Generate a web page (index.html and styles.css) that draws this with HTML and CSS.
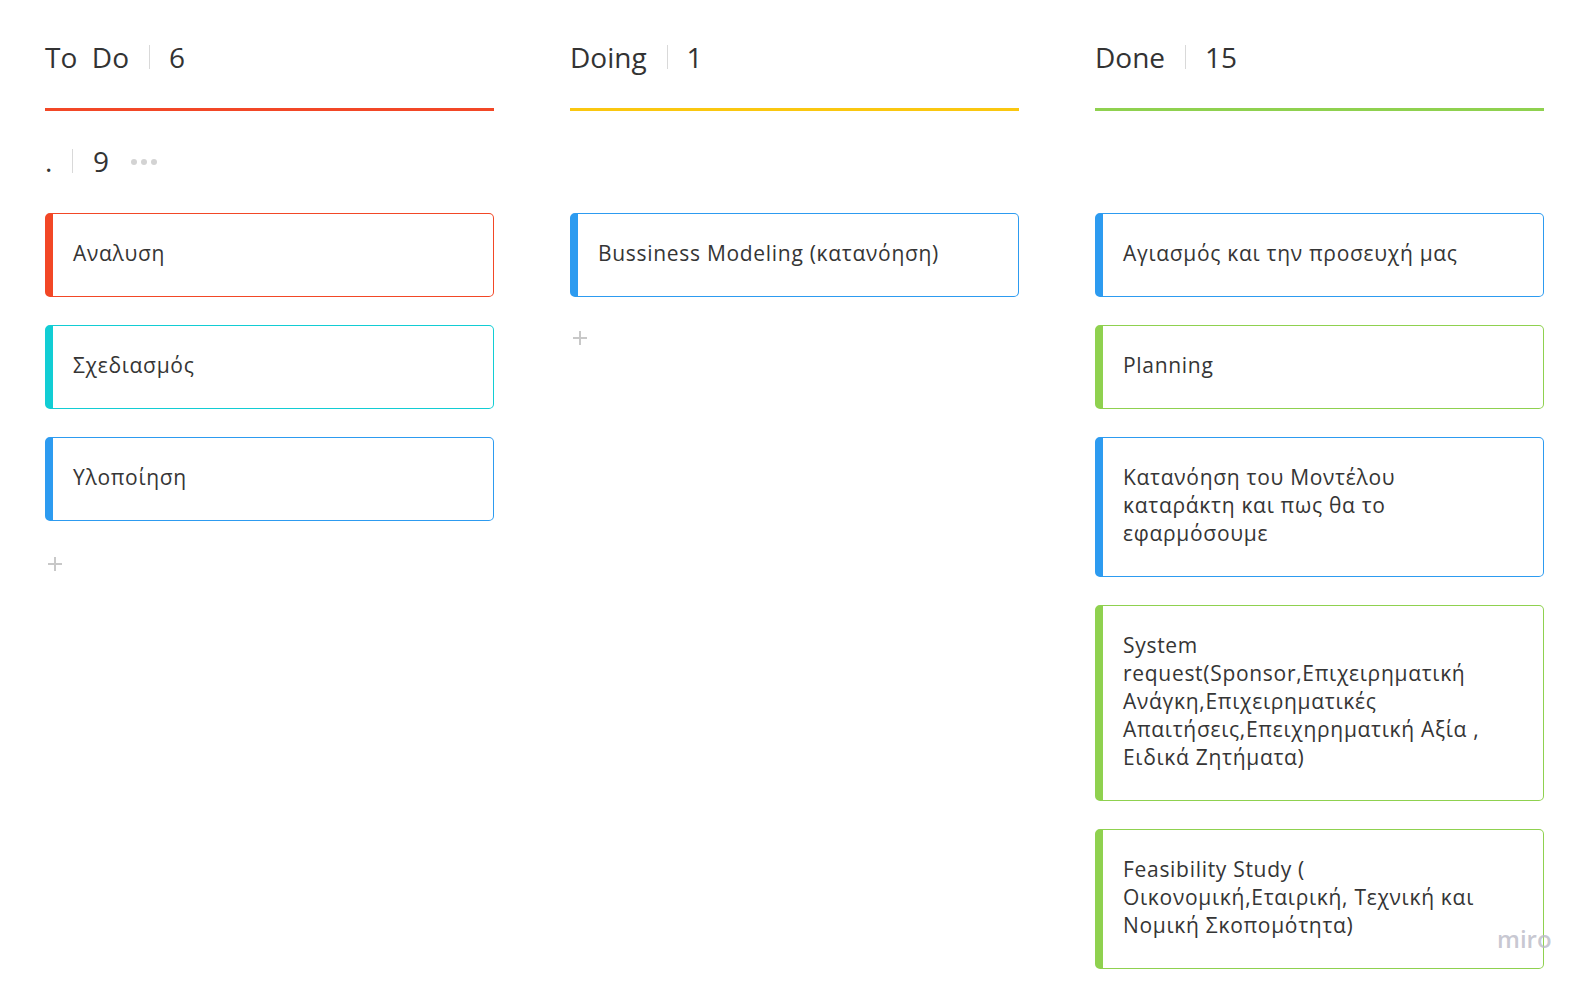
FILE: index.html
```html
<!DOCTYPE html>
<html lang="el">
<head>
<meta charset="utf-8">
<title>Kanban</title>
<link rel="stylesheet" href="styles.css">
</head>
<body>
<main class="board">
  <div class="col-head">
    <span class="col-title">To  Do</span><span class="sep"></span><span class="col-count">6</span>
  </div>
  <div class="col-head">
    <span class="col-title">Doing</span><span class="sep"></span><span class="col-count">1</span>
  </div>
  <div class="col-head">
    <span class="col-title">Done</span><span class="sep"></span><span class="col-count">15</span>
  </div>

  <div class="rule rule-red"></div>
  <div class="rule rule-yellow"></div>
  <div class="rule rule-green"></div>

  <div class="lane-head">
    <span class="lane-title">.</span><span class="sep sep-small"></span><span class="lane-count">9</span>
    <span class="dots"><i></i><i></i><i></i></span>
  </div>
  <div class="lane-empty"></div>
  <div class="lane-empty"></div>

  <div class="cards">
    <div class="card card-red">Αναλυση</div>
    <div class="card card-cyan">Σχεδιασμός</div>
    <div class="card card-blue">Υλοποίηση</div>
    <div class="add add-todo"><svg width="16" height="16" viewBox="0 0 16 16"><path d="M8 1v14M1 8h14" stroke="#c8c8c8" stroke-width="2"/></svg></div>
  </div>
  <div class="cards">
    <div class="card card-blue">Bussiness Modeling (κατανόηση)</div>
    <div class="add add-doing"><svg width="16" height="16" viewBox="0 0 16 16"><path d="M8 1v14M1 8h14" stroke="#c8c8c8" stroke-width="2"/></svg></div>
  </div>
  <div class="cards">
    <div class="card card-blue">Αγιασμός και την προσευχή μας</div>
    <div class="card card-green">Planning</div>
    <div class="card card-blue">Κατανόηση του Μοντέλου καταράκτη και πως θα το εφαρμόσουμε</div>
    <div class="card card-green">System request(Sponsor,Επιχειρηματική Ανάγκη,Επιχειρηματικές Απαιτήσεις,Επειχηρηματική Αξία , Ειδικά Ζητήματα)</div>
    <div class="card card-green">Feasibility Study ( Οικονομική,Εταιρική, Τεχνική και Νομική Σκοπομότητα)</div>
  </div>
</main>
<div class="watermark">miro</div>
</body>
</html>
```

FILE: styles.css
```css
html, body {
  margin: 0;
  padding: 0;
  background: #ffffff;
  height: 100%;
  overflow: hidden;
}

body {
  font-family: "Open Sans", "Noto Sans", sans-serif;
  color: #333333;
}

.board {
  display: grid;
  grid-template-columns: 449px 449px 449px;
  column-gap: 76px;
  padding: 38px 0 0 45px;
  align-items: start;
}

.col-head {
  display: flex;
  align-items: center;
  font-size: 28px;
  line-height: 38px;
  height: 38px;
  color: #333;
}

.col-title {
  white-space: pre;
}

.sep {
  display: inline-block;
  width: 1px;
  height: 24px;
  background: #d9d9d9;
  margin: 0 19px 0 20px;
}

.rule {
  height: 3px;
  margin-top: 32px;
}
.rule-red { background: #f24726; }
.rule-yellow { background: #fac710; }
.rule-green { background: #8fd14f; }

.lane-head {
  display: flex;
  align-items: center;
  margin-top: 31px;
  height: 38px;
  font-size: 28px;
  line-height: 38px;
  color: #333;
}

.lane-title {
  width: 6px;
}

.sep-small {
  height: 24px;
  margin: 0 20px 0 21px;
}

.dots {
  display: flex;
  gap: 4px;
  margin-left: 22px;
  margin-top: 2px;
}
.dots i {
  display: block;
  width: 6px;
  height: 6px;
  border-radius: 50%;
  background: #d3d3d3;
}

.lane-empty {
  height: 38px;
  margin-top: 31px;
}

.cards {
  display: flex;
  flex-direction: column;
  gap: 28px;
  margin-top: 33px;
}

.card {
  box-sizing: border-box;
  border: 1px solid;
  border-left-width: 8px;
  border-radius: 5px;
  padding: 25px 48px 29px 20px;
  font-size: 21px;
  line-height: 28px;
  letter-spacing: 0.7px;
  color: #353535;
  background: #fff;
}

.card-red { border-color: #f24726; }
.card-cyan { border-color: #12cdd4; }
.card-blue { border-color: #2d9bf0; }
.card-green { border-color: #8fd14f; }

.add {
  height: 16px;
  margin-left: 2px;
}
.add svg { display: block; }
.add-todo { margin-top: 7px; }
.add-doing { margin-top: 5px; }

.watermark {
  position: absolute;
  left: 1497px;
  top: 922px;
  font-family: "Open Sans", sans-serif;
  font-weight: 600;
  font-size: 24px;
  letter-spacing: 0;
  color: rgba(185, 185, 198, 0.8);
}
```
